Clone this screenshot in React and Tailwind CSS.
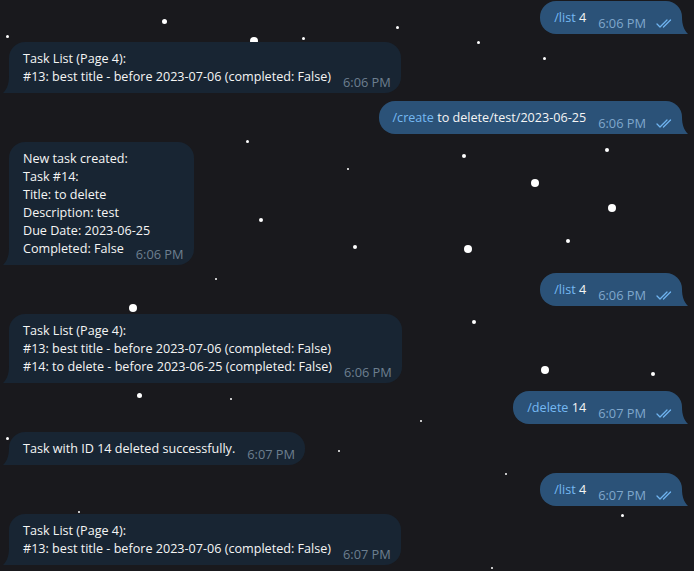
import React from 'react';

const stars = [
  [164, 21, 5], [7, 36, 3], [254, 41, 8], [303, 38, 3], [397, 27, 3], [478, 42, 3],
  [544, 58, 3], [247, 141, 3], [464, 156, 4], [607, 150, 4], [348, 169, 2], [535, 183, 8],
  [612, 208, 8], [261, 220, 4], [355, 247, 4], [468, 249, 8], [568, 241, 4], [216, 279, 2],
  [133, 308, 8], [474, 322, 4], [545, 370, 8], [653, 374, 4], [139, 395, 5], [231, 399, 2],
  [421, 421, 2], [7, 438, 3], [339, 451, 2], [506, 474, 2], [79, 512, 2], [622, 515, 3],
  [492, 568, 2],
];

const taskList = ['Task List (Page 4):', '#13: best title - before 2023-07-06 (completed: False)'];

const messages = [
  { out: true, cmd: '/list', rest: ' 4', time: '6:06 PM' },
  { out: false, lines: taskList, time: '6:06 PM' },
  { out: true, cmd: '/create', rest: ' to delete/test/2023-06-25', time: '6:06 PM' },
  {
    out: false,
    lines: [
      'New task created:',
      'Task #14:',
      'Title: to delete',
      'Description: test',
      'Due Date: 2023-06-25',
      'Completed: False',
    ],
    time: '6:06 PM',
  },
  { out: true, cmd: '/list', rest: ' 4', time: '6:06 PM' },
  {
    out: false,
    lines: [...taskList, '#14: to delete - before 2023-06-25 (completed: False)'],
    time: '6:06 PM',
  },
  { out: true, cmd: '/delete', rest: ' 14', time: '6:07 PM' },
  { out: false, lines: ['Task with ID 14 deleted successfully.'], time: '6:07 PM' },
  { out: true, cmd: '/list', rest: ' 4', time: '6:07 PM' },
  { out: false, lines: taskList, time: '6:07 PM' },
];

const DoubleCheck = () => (
  <svg width="17" height="9" viewBox="0 0 17 9" fill="none" className="mb-[-1px] ml-[10px] shrink-0">
    <path d="M1 5 L4 8 L11 1" stroke="#6fb4f0" strokeWidth="1.3" strokeLinecap="round" strokeLinejoin="round" />
    <path d="M7.5 8 L14.5 1" stroke="#6fb4f0" strokeWidth="1.3" strokeLinecap="round" />
  </svg>
);

const TailIn = () => (
  <svg width="12" height="17" viewBox="0 0 12 17" className="absolute left-[-6px] bottom-0">
    <path d="M6 0 C6 8 4 13 0 17 L12 17 L12 0 Z" fill="#182533" />
  </svg>
);

const TailOut = () => (
  <svg width="12" height="17" viewBox="0 0 12 17" className="absolute right-[-6px] bottom-0">
    <path d="M6 0 C6 8 8 13 12 17 L0 17 L0 0 Z" fill="#2b5278" />
  </svg>
);

const Incoming = ({ lines, time }) => {
  const last = lines[lines.length - 1];
  return (
    <div className="flex justify-start pl-[9px]">
      <div className="relative bg-[#182533] rounded-[16px] rounded-bl-none pl-[14px] pr-[10px] pt-[8px] pb-[7px] text-[12.6px] leading-[18px] text-[#f5f5f5]">
        {lines.slice(0, -1).map((l, i) => (
          <div key={i} className="whitespace-pre">{l}</div>
        ))}
        <div className="flex items-end justify-between">
          <span className="whitespace-pre">{last}</span>
          <span className="ml-[12px] text-[12.8px] leading-[12px] text-[#6d7f8f] mb-[-2px] whitespace-pre">{time}</span>
        </div>
        <TailIn />
      </div>
    </div>
  );
};

const Outgoing = ({ cmd, rest, time }) => (
  <div className="flex justify-end pr-[12px]">
    <div className="relative bg-[#2b5278] rounded-[16px] rounded-br-none pl-[14px] pr-[9px] pt-[8px] pb-[7px] text-[12.6px] leading-[18px] text-[#f5f5f5]">
      <div className="flex items-end">
        <span className="whitespace-pre">
          <span className="text-[#75b9f3]">{cmd}</span>
          {rest}
        </span>
        <span className="ml-[12px] text-[12.8px] leading-[12px] text-[#7fa7cc] mb-[-2px] whitespace-pre">{time}</span>
        <DoubleCheck />
      </div>
      <TailOut />
    </div>
  </div>
);

export default function App() {
  return (
    <div
      className="relative w-[694px] h-[571px] overflow-hidden bg-[#19191d]"
      style={{ fontFamily: '"Open Sans", "Liberation Sans", sans-serif' }}
    >
      {/* star field */}
      <div className="absolute inset-0">
        {stars.map(([x, y, d], i) => (
          <div
            key={i}
            className="absolute rounded-full bg-white"
            style={{ left: x - d / 2, top: y - d / 2, width: d, height: d }}
          />
        ))}
      </div>

      {/* messages */}
      <div className="relative flex flex-col gap-[8px] pt-[1px]">
        {messages.map((m, i) =>
          m.out ? <Outgoing key={i} {...m} /> : <Incoming key={i} {...m} />
        )}
      </div>
    </div>
  );
}
